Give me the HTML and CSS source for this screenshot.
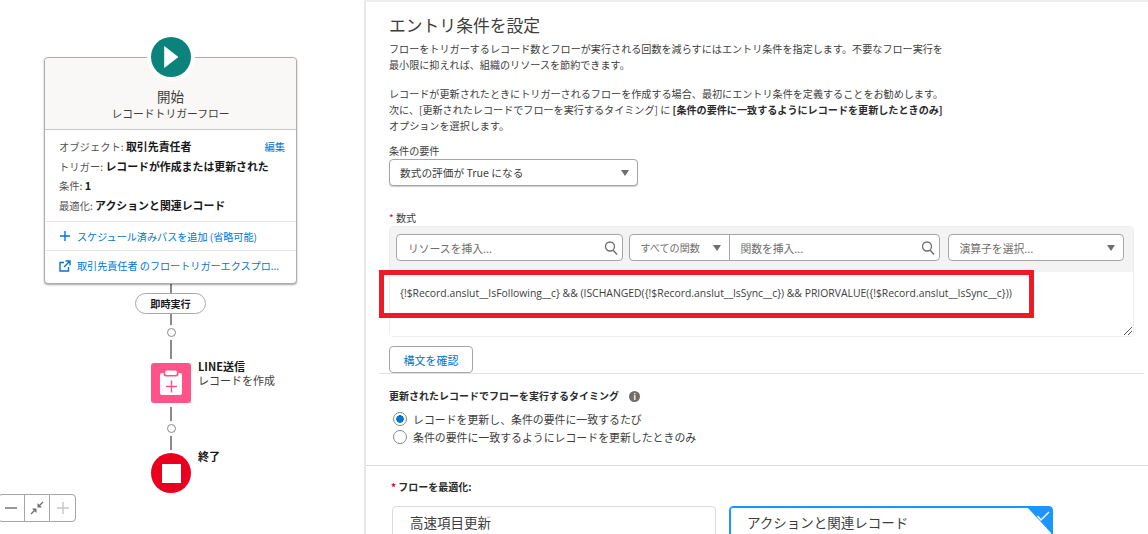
FILE: index.html
```html
<!DOCTYPE html>
<html lang="ja">
<head>
    <meta charset="UTF-8">
    <title>エントリ条件を設定</title>
    <link rel="stylesheet" href="styles.css">
</head>
<body>
    <div class="canvas">
        <div class="line line-top"></div>
        <div class="line line-mid"></div>

        <div class="start-card">
            <div class="start-head">
                <div class="start-title">開始</div>
                <div class="start-sub">レコードトリガーフロー</div>
            </div>
            <div class="start-body">
                <div class="prop prop-edit"><span><span class="prop-key">オブジェクト:</span> <b>取引先責任者</b></span><a class="link">編集</a></div>
                <div class="prop"><span class="prop-key">トリガー:</span> <b>レコードが作成または更新された</b></div>
                <div class="prop"><span class="prop-key">条件:</span> <b>1</b></div>
                <div class="prop"><span class="prop-key">最適化:</span> <b>アクションと関連レコード</b></div>
            </div>
            <div class="start-link">
                <svg width="12" height="12" viewBox="0 0 12 12"><path d="M6 1v10M1 6h10" stroke="#0176d3" stroke-width="1.4" fill="none"/></svg>
                <span class="link">スケジュール済みパスを追加 (省略可能)</span>
            </div>
            <div class="start-link">
                <svg width="12" height="12" viewBox="0 0 12 12"><path d="M5 2.5H1V11h8.5V7M6.5 1H11v4.5M11 1L5 7" stroke="#0176d3" stroke-width="1.4" fill="none"/></svg>
                <span class="link">取引先責任者 のフロートリガーエクスプロ...</span>
            </div>
        </div>

        <div class="start-icon">
            <svg width="40" height="40" viewBox="0 0 40 40"><circle cx="20" cy="20" r="20" fill="#0b827c"/><path d="M13.5 9.5v21L27 20z" fill="#fff" stroke="#fff" stroke-width="0.6" stroke-linejoin="round"/></svg>
        </div>

        <div class="pill">即時実行</div>
        <div class="dot dot-one"></div>
        <div class="dot dot-two"></div>

        <div class="node node-action">
            <div class="node-icon">
                <svg width="40" height="40" viewBox="0 0 40 40"><rect x="9" y="10" width="22" height="22" rx="2" fill="#fff"/><rect x="12.5" y="6" width="15" height="7.5" rx="2.5" fill="#ff538a"/><rect x="14" y="7.5" width="12" height="4.5" rx="2" fill="#fff"/><path d="M20.500 17.500v12M15 23.500h11" stroke="#ff538a" stroke-width="1.400"/></svg>
            </div>
            <div class="node-text"><b>LINE送信</b><span>レコードを作成</span></div>
        </div>

        <div class="node node-end">
            <div class="end-icon"><div class="end-square"></div></div>
            <div class="node-text"><b>終了</b></div>
        </div>

        <div class="zoom-bar">
            <div class="zoom-btn"><svg width="12" height="12" viewBox="0 0 12 12"><path d="M0 6h12" stroke="#706e6b" stroke-width="1.400"/></svg></div>
            <div class="zoom-btn"><svg width="14" height="14" viewBox="0 0 14 14"><path d="M13 1L9.500 4.500M1 13l3.500-3.500" stroke="#706e6b" stroke-width="1.300"/><path d="M7.500 2v4.500H12zM6.500 12V7.500H2z" fill="#706e6b"/></svg></div>
            <div class="zoom-btn"><svg width="12" height="12" viewBox="0 0 12 12"><path d="M0 6h12M6 0v12" stroke="#c9c7c5" stroke-width="1.400"/></svg></div>
        </div>
    </div>

    <div class="panel">
        <div class="section">
            <h2 class="title">エントリ条件を設定</h2>
            <p class="help">フローをトリガーするレコード数とフローが実行される回数を減らすにはエントリ条件を指定します。不要なフロー実行を<br>最小限に抑えれば、組織のリソースを節約できます。</p>
            <p class="help help-second">レコードが更新されたときにトリガーされるフローを作成する場合、最初にエントリ条件を定義することをお勧めします。<br>次に、[更新されたレコードでフローを実行するタイミング] に <b>[条件の要件に一致するようにレコードを更新したときのみ]</b><br>オプションを選択します。</p>

            <div class="label label-cond">条件の要件</div>
            <div class="select select-cond">
                <span>数式の評価が True になる</span>
                <i class="caret"></i>
            </div>

            <div class="label label-formula"><span class="req">*</span> 数式</div>
            <div class="editor">
                <div class="toolbar">
                    <div class="field field-resource">
                        <span class="hint">リソースを挿入...</span>
                        <svg width="14" height="14" viewBox="0 0 14 14"><circle cx="6" cy="5.500" r="4.500" stroke="#706e6b" stroke-width="1.300" fill="none"/><path d="M9 9l4 4.500" stroke="#706e6b" stroke-width="1.500"/></svg>
                    </div>
                    <div class="field field-function">
                        <div class="func-type"><span class="hint">すべての関数</span><i class="caret"></i></div>
                        <div class="func-input">
                            <span class="hint">関数を挿入...</span>
                            <svg width="14" height="14" viewBox="0 0 14 14"><circle cx="6" cy="5.500" r="4.500" stroke="#706e6b" stroke-width="1.300" fill="none"/><path d="M9 9l4 4.500" stroke="#706e6b" stroke-width="1.500"/></svg>
                        </div>
                    </div>
                    <div class="field field-operator">
                        <span class="hint">演算子を選択...</span>
                        <i class="caret"></i>
                    </div>
                </div>
                <div class="formula">
                    <span class="formula-text">{!$Record.anslut__IsFollowing__c} &amp;&amp; (ISCHANGED({!$Record.anslut__IsSync__c}) &amp;&amp; PRIORVALUE({!$Record.anslut__IsSync__c}))</span>
                    <svg class="grip" width="8" height="8" viewBox="0 0 8 8"><path d="M0 8l8-8M4 8l4-4" stroke="#555" stroke-width="1"/></svg>
                </div>
                <div class="highlight"></div>
            </div>

            <div class="check-row"><button class="btn">構文を確認</button></div>

            <div class="timing-label">更新されたレコードでフローを実行するタイミング <span class="info">i</span></div>
            <div class="radio-row"><i class="radio radio-on"></i>レコードを更新し、条件の要件に一致するたび</div>
            <div class="radio-row"><i class="radio"></i>条件の要件に一致するようにレコードを更新したときのみ</div>
        </div>

        <div class="section-lower">
            <div class="opt-label"><span class="req">*</span> フローを最適化:</div>
            <div class="opt-cards">
                <div class="opt-card">高速項目更新</div>
                <div class="opt-card opt-selected">
                    アクションと関連レコード
                    <svg class="opt-check" width="25" height="27" viewBox="0 0 25 27"><path d="M0 0h25v27z" fill="#1b96ff"/><path d="M10.500 9l3.500 4 8-8" stroke="#fff" stroke-width="1.400" fill="none"/></svg>
                </div>
            </div>
        </div>
    </div>
</body>
</html>
```

FILE: styles.css
```css
* { box-sizing: border-box; }
html, body { height: 100%; }
body {
    margin: 0;
    display: flex;
    height: 534px;
    overflow: hidden;
    background: #fff;
    color: #3e3e3c;
    font-family: "Noto Sans CJK JP", "Liberation Sans", sans-serif;
    font-size: 10.1px;
}
b { font-weight: 700; color: #181818; }
.link { color: #0176d3; }

/* flow canvas */
.canvas { position: relative; width: 364px; flex: none; }
.line { position: absolute; left: 170px; width: 2px; background: #8a8a8a; }
.line-top { top: 283px; height: 114px; }
.line-mid { top: 403px; height: 50px; }

.start-card {
    position: absolute;
    left: 44px;
    top: 57px;
    width: 253px;
    height: 227px;
    background: #fff;
    border: 1px solid #b0adab;
    border-radius: 4px;
    box-shadow: 0 1px 2px rgba(0, 0, 0, 0.35);
    display: flex;
    flex-direction: column;
}
.start-head {
    height: 72px;
    padding-top: 30px;
    background: #f9f8f6;
    border-bottom: 1px solid #c9c7c5;
    border-radius: 4px 4px 0 0;
    text-align: center;
}
.start-title { font-size: 13.5px; line-height: 17px; }
.start-sub { font-size: 10.8px; line-height: 16px; }
.start-body {
    height: 92px;
    padding: 7px 11px 0 14px;
    border-bottom: 1px solid #e5e5e5;
}
.prop { line-height: 19.5px; white-space: nowrap; font-size: 10.3px; }
.prop b { font-size: 10.9px; }
.prop-edit { display: flex; justify-content: space-between; }
.prop-key { color: #54524f; }
.start-link {
    height: 29px;
    padding-left: 14px;
    display: flex;
    align-items: center;
    gap: 6px;
    border-bottom: 1px solid #e5e5e5;
    white-space: nowrap;
}
.start-link:last-child { border-bottom: none; }

.start-icon {
    position: absolute;
    left: 147px;
    top: 33px;
    width: 48px;
    height: 48px;
    padding: 4px;
    border-radius: 50%;
    background: #fff;
}
.start-icon svg { display: block; }

.pill {
    position: absolute;
    left: 135px;
    top: 293px;
    width: 71px;
    height: 21px;
    border: 1px solid #a8a6a4;
    border-radius: 11px;
    background: #fff;
    text-align: center;
    line-height: 19px;
    font-weight: 700;
    color: #181818;
}
.dot {
    position: absolute;
    left: 166.5px;
    width: 9px;
    height: 9px;
    border: 1px solid #8a8a8a;
    border-radius: 50%;
    background: #fff;
    box-shadow: 0 0 0 3px #fff;
}
.dot-one { top: 328px; }
.dot-two { top: 424px; }

.node { position: absolute; left: 151px; display: flex; gap: 7px; }
.node-action { top: 363px; }
.node-end { top: 453px; }
.node-icon { width: 40px; height: 40px; border-radius: 3px; background: #ff538a; box-shadow: 0 0 0 4px #fff; }
.node-icon svg { display: block; }
.node-text { display: flex; flex-direction: column; margin-top: -4px; font-size: 11px; line-height: 14px; }
.end-icon {
    width: 40px;
    height: 40px;
    border-radius: 50%;
    background: #ea001e;
    box-shadow: 0 0 0 3px #fff;
    display: flex;
    align-items: center;
    justify-content: center;
}
.end-square { width: 19px; height: 19px; background: #fff; }

.zoom-bar {
    position: absolute;
    left: -2px;
    top: 494px;
    width: 78px;
    height: 28px;
    display: flex;
    border: 1px solid #a8a6a4;
    border-radius: 4px;
    background: #fff;
}
.zoom-btn {
    flex: 1;
    display: flex;
    align-items: center;
    justify-content: center;
    border-right: 1px solid #a8a6a4;
}
.zoom-btn:last-child { border-right: none; }

/* right panel */
.panel {
    flex: 1;
    min-width: 0;
    border-left: 2px solid #e8e8e8;
    border-top: 2px solid #eeeeee;
    display: flex;
    flex-direction: column;
}
.section { height: 464px; flex: none; padding: 0 14px 0 23px; border-bottom: 1px solid #dddbda; }
.title { margin: 11px 0 0; font-size: 16.8px; font-weight: 400; line-height: 24px; color: #3e3e3c; }
.help { margin: 4px 0 0; line-height: 16px; white-space: nowrap; }
.help-second { margin-top: 13px; }
.help b { color: #2b2b2b; }
.label { line-height: 14px; }
.label-cond { margin-top: 10px; }
.select {
    display: flex;
    align-items: center;
    justify-content: space-between;
    background: #fff;
    border: 1px solid #a8a6a4;
    border-radius: 4px;
}
.select-cond {
    margin-top: 1px;
    width: 249px;
    height: 27px;
    padding: 0 8px 0 10px;
    font-size: 10.7px;
    box-shadow: 0 1px 1px rgba(0, 0, 0, 0.2);
}
.caret {
    display: block;
    flex: none;
    width: 0;
    height: 0;
    border-left: 4.5px solid transparent;
    border-right: 4.5px solid transparent;
    border-top: 6px solid #706e6b;
}
.label-formula { margin-top: 25px; }
.req { color: #ea001e; }

.editor {
    position: relative;
    margin-top: 1px;
    width: 745px;
    border: 1px solid #eeeeee;
    border-radius: 4px;
}
.toolbar {
    height: 45px;
    padding: 7px 9px 0 6px;
    background: #f3f3f3;
    display: flex;
    gap: 6px;
}
.field {
    height: 27px;
    background: #fff;
    border: 1px solid #a8a6a4;
    border-radius: 4px;
    display: flex;
    align-items: center;
    justify-content: space-between;
}
.field-resource { width: 228px; padding: 0 4px 0 11px; }
.field-function { width: 312px; }
.field-operator { width: 176px; margin-left: 2px; padding: 0 8px 0 10px; }
.hint { color: #706e6b; white-space: nowrap; font-size: 10.8px; }
.func-type {
    width: 100px;
    height: 100%;
    padding: 0 8px 0 10px;
    display: flex;
    align-items: center;
    justify-content: space-between;
    border-right: 1px solid #a8a6a4;
}
.func-type .hint { font-size: 10.1px; }
.func-input {
    flex: 1;
    padding: 0 4px 0 10px;
    display: flex;
    align-items: center;
    justify-content: space-between;
}
.formula { position: relative; height: 64px; padding: 13px 0 0 10px; background: #fff; }
.formula-text { color: #3e3e3c; white-space: nowrap; font-family: "Open Sans", "Noto Sans CJK JP", sans-serif; font-size: 10.4px; }
.grip { position: absolute; right: 1px; bottom: 1px; }
.highlight {
    position: absolute;
    left: -11px;
    top: 43px;
    width: 655px;
    height: 48px;
    border: 5px solid #ed1c24;
}

.check-row { margin: 9px -10px 0 -10px; padding-left: 10px; border-bottom: 1px solid #e0e0e0; height: 28px; }
.btn {
    display: block;
    width: 84px;
    height: 27px;
    padding: 0;
    background: #fff;
    border: 1px solid #a8a6a4;
    border-radius: 4px;
    color: #0176d3;
    font: inherit;
    font-size: 11px;
}
.timing-label { margin-top: 14px; line-height: 16px; font-weight: 700; color: #2b2b2b; font-size: 10px; }
.info {
    display: inline-block;
    width: 11px;
    height: 11px;
    margin-left: 8px;
    border-radius: 50%;
    background: #706e6b;
    color: #fff;
    font-size: 8px;
    line-height: 11px;
    text-align: center;
}
.radio-row { display: flex; align-items: center; gap: 6px; height: 18px; padding-left: 4px; font-size: 10.9px; white-space: nowrap; }
.timing-label + .radio-row { margin-top: 6px; }
.radio { width: 14px; height: 14px; flex: none; border: 1px solid #8a8886; border-radius: 50%; background: #fff; }
.radio-on { background: radial-gradient(circle, #0176d3 0 3.5px, #fff 4px); }

.section-lower { flex: 1; min-height: 0; padding: 13px 0 0 24px; overflow: hidden; }
.opt-label { padding-left: 1px; line-height: 16px; font-weight: 700; color: #2b2b2b; font-size: 10px; }
.opt-cards { display: flex; gap: 13px; margin-top: 11px; padding-left: 2px; }
.opt-card {
    position: relative;
    width: 324px;
    height: 60px;
    padding: 5px 17px;
    border: 1px solid #dddbda;
    border-radius: 4px;
    font-size: 13.5px;
    line-height: 20px;
}
.opt-selected { border: 1px solid #1b96ff; box-shadow: 0 0 0 1px #1b96ff inset; }
.opt-check { position: absolute; right: 0; top: 0; }
```
